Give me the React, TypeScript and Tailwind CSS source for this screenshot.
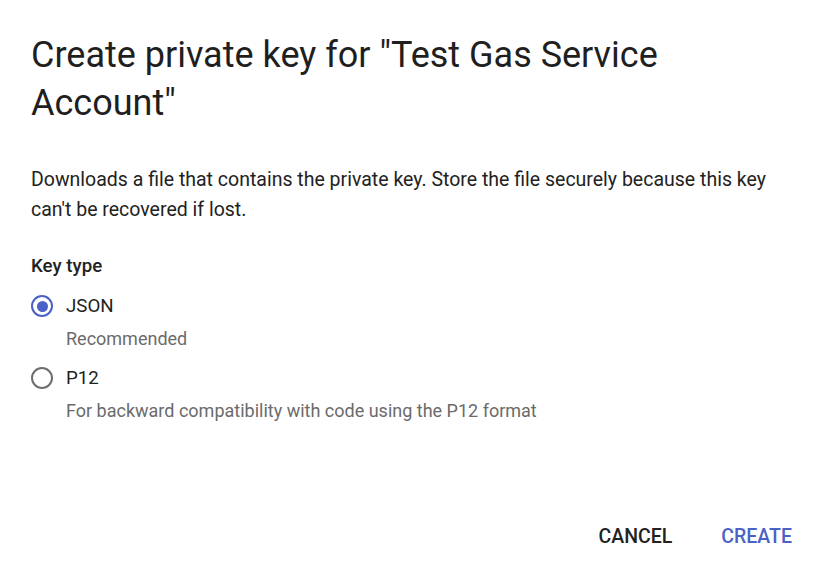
export default function App() {
  return (
    <div className="w-[823px] h-[583px] bg-white text-[#202124] font-['Roboto',_'Liberation_Sans',_sans-serif] flex flex-col px-[31px] pt-[31px] pb-[32px]">
      <h1 className="text-[36px] leading-[48px] font-normal text-[#1f1f1f]">
        Create private key for "Test Gas Service Account"
      </h1>

      <p className="mt-[38px] text-[19.5px] leading-[30px] text-[#222]">
        Downloads a file that contains the private key. Store the file securely because this key can't be recovered if lost.
      </p>

      <div className="mt-[26px] text-[18.7px] leading-[30px] font-medium text-[#222]">Key type</div>

      <div className="mt-[10px] flex flex-col">
        <label className="flex items-center gap-[13px] h-[30px]">
          <span className="w-[22px] h-[22px] rounded-full border-[2.5px] border-[#4b61c7] flex items-center justify-center">
            <span className="w-[11px] h-[11px] rounded-full bg-[#4b61c7]" />
          </span>
          <span className="text-[18.7px] text-[#222]">JSON</span>
        </label>
        <div className="pl-[35px] mt-[3px] text-[18px] leading-[30px] text-[#6b6b6b]">Recommended</div>

        <label className="mt-[9px] flex items-center gap-[13px] h-[30px]">
          <span className="w-[22px] h-[22px] rounded-full border-[2.5px] border-[#6e6e6e]" />
          <span className="text-[18.7px] text-[#222]">P12</span>
        </label>
        <div className="pl-[35px] mt-[3px] text-[18px] leading-[30px] text-[#6b6b6b]">
          For backward compatibility with code using the P12 format
        </div>
      </div>

      <div className="mt-auto flex justify-end items-center gap-[49px]">
        <button className="text-[19.5px] font-medium text-[#222]">CANCEL</button>
        <button className="text-[19.5px] font-medium text-[#4b61c7]">CREATE</button>
      </div>
    </div>
  );
}
